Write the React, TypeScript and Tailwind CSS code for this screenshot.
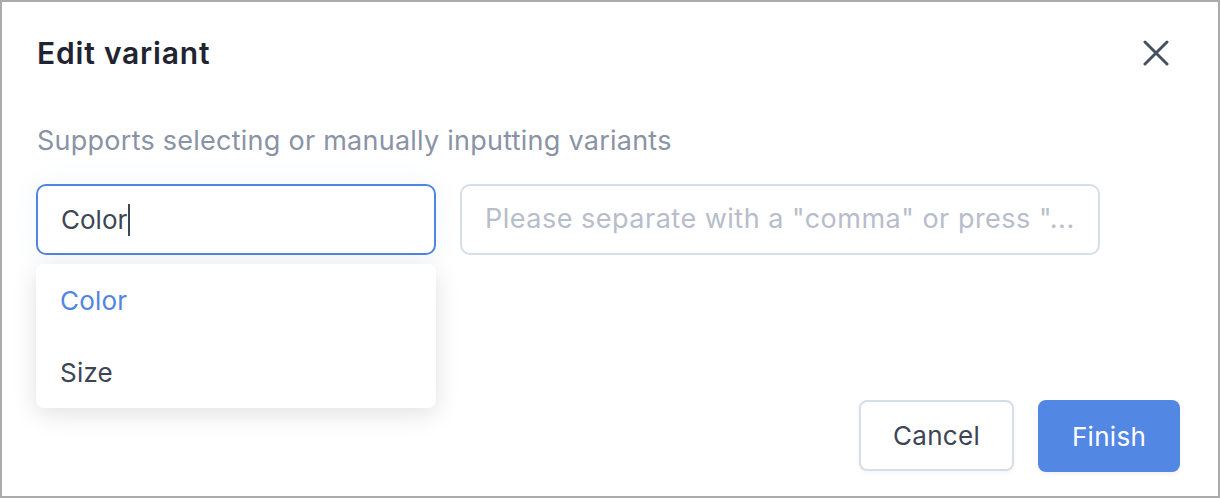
const options = ['Color', 'Size'];

export default function App() {
  return (
    <div
      className="w-[1220px] h-[498px] bg-white border-2 border-[#ababab] overflow-hidden"
      style={{ fontFamily: 'Inter, "Liberation Sans", sans-serif' }}
    >
      <div className="flex items-center justify-between pl-[35px] pr-[49px] pt-[32px]">
        <h2 className="text-[30px] leading-[38px] font-semibold tracking-[0.8px] text-[#1f2430]">Edit variant</h2>
        <button className="text-[#475063]">
          <svg width="26" height="26" viewBox="0 0 26 26" fill="none" stroke="currentColor" strokeWidth="3" strokeLinecap="round">
            <path d="M2 2L24 24M24 2L2 24" />
          </svg>
        </button>
      </div>

      <p className="pl-[35px] mt-[52px] text-[27px] leading-[34px] tracking-[0.25px] text-[#8a93a6]">
        Supports selecting or manually inputting variants
      </p>

      <div className="flex gap-[24px] pl-[34px] mt-[26px]">
        <div className="relative w-[400px]">
          <div className="h-[71px] flex items-center px-[23px] rounded-[10px] border-2 border-[#5185e2] text-[26px] text-[#3d4555] shadow-[0_0_24px_rgba(80,110,180,0.08)]">
            Color
            <span className="inline-block w-[2px] h-[32px] bg-[#3d4555] ml-[1px]" />
          </div>
          <div className="absolute left-0 top-[80px] w-[400px] bg-white rounded-[8px] shadow-[0_6px_24px_rgba(0,0,0,0.12)]">
            {options.map((o, i) => (
              <div
                key={o}
                className={`h-[72px] flex items-center px-[24px] text-[26px] tracking-[0.2px] ${i === 0 ? 'text-[#5185e2]' : 'text-[#3d4555]'}`}
              >
                {o}
              </div>
            ))}
          </div>
        </div>
        <div className="w-[640px] h-[71px] flex items-center px-[23px] rounded-[10px] border-2 border-[#d6dee8] text-[27px] tracking-[0.5px] text-[#b7bdcb] whitespace-nowrap">
          Please separate with a "comma" or press "...
        </div>
      </div>

      <div className="flex justify-end gap-[24px] pr-[38px] mt-[145px]">
        <button className="w-[155px] h-[71px] rounded-[8px] border-2 border-[#d6dee8] bg-white text-[26px] tracking-[0.3px] text-[#3d4555] shadow-[0_2px_4px_rgba(0,0,0,0.04)]">
          Cancel
        </button>
        <button className="w-[142px] h-[72px] rounded-[8px] bg-[#5387e4] text-[26px] tracking-[0.3px] text-white shadow-[0_2px_4px_rgba(0,0,0,0.06)]">
          Finish
        </button>
      </div>
    </div>
  );
}
